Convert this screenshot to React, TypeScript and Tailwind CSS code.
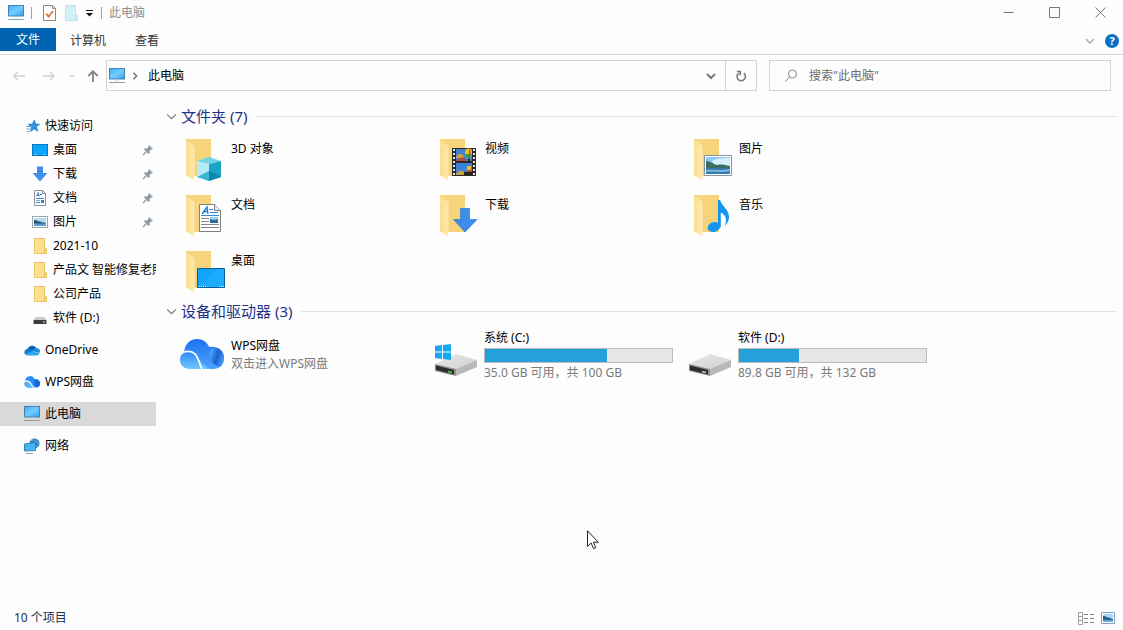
import React, { useState } from 'react';

interface IconProps {
  className?: string;
}

interface NavItem {
  label: string;
  icon: React.FC<IconProps>;
  pinned?: boolean;
}

interface Folder {
  name: string;
  overlay: React.FC;
}

interface Drive {
  name: string;
  info: string;
  used: number;
  system?: boolean;
}

const PcIcon: React.FC<IconProps> = ({ className }) => (
  <svg className={className} width="16" height="16" viewBox="0 0 16 16">
    <defs>
      <linearGradient id="pc" x1="0" y1="0" x2="1" y2="1">
        <stop offset="0" stopColor="#3eaefa" />
        <stop offset="0.5" stopColor="#74ccff" />
        <stop offset="1" stopColor="#2d9bf0" />
      </linearGradient>
    </defs>
    <rect x="0.5" y="0.5" width="15" height="10.5" fill="url(#pc)" stroke="#4483ad" />
    <path d="M6 11.5h4v1H6z" fill="#b9c9d6" />
    <path d="M0 14.5h16" stroke="#8fa0ab" />
  </svg>
);

const StarIcon: React.FC<IconProps> = ({ className }) => (
  <svg className={className} width="16" height="16" viewBox="0 0 16 16">
    <path
      d="M9.500 2l1.200 4 4 .2-3.200 2.600 1.400 4.400-3.700-2.100L5.300 13.500l1.200-4.200L3 6.300l4.200-.3z"
      fill="#2f95dd"
      stroke="#1b76b8"
      strokeWidth="0.6"
    />
    <path d="M1 8.500h4M1.500 11h4M2 13.500h2.500" stroke="#5fa9dc" />
  </svg>
);

const DesktopIcon: React.FC<IconProps> = ({ className }) => (
  <svg className={className} width="16" height="16" viewBox="0 0 16 16">
    <rect x="0.5" y="2.5" width="15" height="11" fill="#0ea3fb" stroke="#0679c4" />
    <path d="M2 12.500h4M11 12.500h3" stroke="#9bd8ff" strokeDasharray="1 1" />
  </svg>
);

const DownloadIcon: React.FC<IconProps> = ({ className }) => (
  <svg className={className} width="16" height="16" viewBox="0 0 16 16">
    <path d="M5 0.500h6v6.500h4.500L8 15.500 0.500 7H5z" fill="#3f8ee8" />
  </svg>
);

const DocIcon: React.FC<IconProps> = ({ className }) => (
  <svg className={className} width="16" height="16" viewBox="0 0 16 16">
    <path d="M2.500 0.500h8l3 3v12h-11z" fill="#fff" stroke="#8c9196" />
    <path d="M10.500 0.500v3h3" fill="none" stroke="#8c9196" />
    <path d="M4.500 6.500l1.500-4 1.500 4M5 5.500h2M8 4.500h2M4 8.500h8M4 12.500h4" fill="none" stroke="#3c82bd" />
    <path d="M4 10.500h4" stroke="#8aa8c0" />
    <path d="M9 10h3v3H9z" fill="#3c82bd" />
  </svg>
);

const PictureIcon: React.FC<IconProps> = ({ className }) => (
  <svg className={className} width="16" height="16" viewBox="0 0 16 16">
    <rect x="0.5" y="2.5" width="15" height="11" fill="#fff" stroke="#9ba7b0" />
    <path d="M2 4h12v8H2z" fill="#b4dcf6" />
    <path d="M2 6c3 0 5 2 12 3v1H2z" fill="#2c5877" />
    <path d="M2 9.500h12V12H2z" fill="#5b9fd6" />
  </svg>
);

const FolderIcon: React.FC<IconProps> = ({ className }) => (
  <svg className={className} width="16" height="16" viewBox="0 0 16 16">
    <path d="M2.500 0.500h10v10h2v5h-12z" fill="#fde08b" stroke="#e8c469" />
    <path d="M12.500 10.500v5" stroke="#e8c469" />
  </svg>
);

const DriveIcon: React.FC<IconProps> = ({ className }) => (
  <svg className={className} width="16" height="16" viewBox="0 0 16 16">
    <path d="M3.500 7h9l2 3H1.500z" fill="#c9c9c9" />
    <path d="M1.500 10h13v4h-13z" fill="#3a3d40" />
    <path d="M11 12h2" stroke="#cfe0d3" />
  </svg>
);

const OneDriveIcon: React.FC<IconProps> = ({ className }) => (
  <svg className={className} width="16" height="16" viewBox="0 0 16 16">
    <path d="M3.500 7a5 5 0 0 1 8.700-1.200L9 9.500z" fill="#0a5db5" />
    <path d="M3.600 6.800a3.600 3.600 0 0 0-2.400 5.800l7.500-3.200-2-1.700a4 4 0 0 0-3.100-.9z" fill="#1079d0" />
    <path d="M8 9l2.200-2.500a3.500 3.500 0 0 1 2.400-.6 3.300 3.300 0 0 1 2.900 5z" fill="#168edc" />
    <path d="M1.200 12.500L8.400 9l7 2.600a2.500 2.500 0 0 1-2.200 1.800H3.600a3.500 3.500 0 0 1-2.400-.9z" fill="#28a8ea" />
  </svg>
);

const CloudIcon: React.FC<IconProps> = ({ className }) => (
  <svg className={className} width="16" height="16" viewBox="0 0 44 44">
    <path d="M4 20a13 13 0 0 1 25-6c9-2 15 4 15 11a11 11 0 0 1-11 12H10C2 37-2 26 4 20z" fill="#2c8bf8" />
    <path d="M30 15c8-1 14 4 14 11a11 11 0 0 1-8 11c-7-6-11-13-6-22z" fill="#1767dc" />
    <path d="M10 20c11-3 11 10 20 17H10A9 9 0 0 1 10 20z" fill="#53b4ff" />
    <path d="M3 21c15-6 15 10 24 17" fill="none" stroke="#fff" strokeWidth="3" />
  </svg>
);

const NetworkIcon: React.FC<IconProps> = ({ className }) => (
  <svg className={className} width="16" height="16" viewBox="0 0 16 16">
    <circle cx="10.500" cy="5.500" r="5" fill="#2f7fb8" />
    <path d="M7 3c2-2 3-1 4 0s3 1 4 3M8 8c2-2 5 0 6 1" fill="none" stroke="#7fc0e8" />
    <path d="M0.500 6l11-1.500v8l-11 .5z" fill="#46b4f6" stroke="#3a7fae" />
    <path d="M2 15.500h7" stroke="#8fa6b6" />
  </svg>
);

const PinIcon: React.FC<IconProps> = ({ className }) => (
  <svg className={className} width="12" height="12" viewBox="0 0 12 12">
    <path d="M7 1l4 4-1.200.6-.6-.2-1.600 1.700.2 2-1 1L1.900 5.200l1-1 2 .2L6.600 2.800l-.2-.8z" fill="#8f9ba4" />
    <path d="M4.500 7.500L1 11" stroke="#8f9ba4" strokeWidth="1.200" />
  </svg>
);

const CubeOverlay: React.FC = () => (
  <g>
    <path d="M17 24l12-4 12 4-12 3z" fill="#6fd4e8" />
    <path d="M17 24l12 3v17l-12-4z" fill="#b5ecf5" />
    <path d="M41 24l-12 3v17l12-4z" fill="#1ba3c8" />
    <path d="M17 40l12-6v10z" fill="#37b5d2" />
    <path d="M29 34l12 6-12 4z" fill="#0b86ad" />
  </g>
);

const VideoOverlay: React.FC = () => (
  <g>
    <path d="M18 11h24v28H18z" fill="#2a2a2c" />
    <path d="M20 12v27M40 12v27" stroke="#e4e4e4" strokeWidth="2" strokeDasharray="2 2" />
    <path d="M22 12h16v12H22zM22 26h16v12H22z" fill="#3f83d6" />
    <path d="M22 20c3-4 5-4 8-1l-2 2h-6z" fill="#d99a3a" />
    <path d="M22 24c3-4 7-4 10-1v1z" fill="#c04a33" />
    <path d="M22 37c4-5 6-4 9-1v2h-9z" fill="#c9a24a" />
    <ellipse cx="34.500" cy="16" rx="3.500" ry="4.500" fill="#f3c518" />
    <path d="M35 11.500c2 2 2 7 0 9z" fill="#d5362b" />
    <path d="M31 17h7l-2 4h-3z" fill="#3a9a42" />
    <path d="M34 22h2v4h-2zM30 35h8v3h-8z" fill="#2c2018" />
    <path d="M33 29h4v4h-4z" fill="#e9bd24" />
    <path d="M34 33h3v2h-3z" fill="#d5362b" />
  </g>
);

const PictureOverlay: React.FC = () => (
  <g>
    <path d="M16.500 18.500h27v20h-27z" fill="#fff" stroke="#8795a0" />
    <path d="M18 20h24v17H18z" fill="#8fcaf2" />
    <path d="M24 24c5-3 12-3 18-3v8H26z" fill="#d9effa" />
    <path d="M18 24c5 0 8 4 12 4 3-1 7 0 12 1v3H18z" fill="#3b6d62" />
    <path d="M18 31h24v6H18z" fill="#3578ad" />
    <path d="M18 33c7-1 12 1 24-1v2c-9 2-16 0-24 1z" fill="#79b6dc" />
  </g>
);

const DocOverlay: React.FC = () => (
  <g>
    <path d="M19.500 11.500h15l6 6v21h-21z" fill="#fff" stroke="#7d7f82" />
    <path d="M34.500 11.500v6h6" fill="#e8e8e8" stroke="#7d7f82" />
    <path d="M22 21l5-7 1 7M23.500 18.500h4.500" fill="none" stroke="#1d78cf" strokeWidth="1.300" />
    <path d="M29 16.500h4M30 19.500h8M21 22.500h18" stroke="#2f8cdd" />
    <path d="M21 25.500h8M21 28.500h8M21 31.500h18M21 34.500h18" stroke="#85888b" />
    <path d="M30 24h8v6h-8z" fill="#2f6f9f" />
    <path d="M30 24h8v2l-4 1-4-1z" fill="#9fd0ee" />
  </g>
);

const DownloadOverlay: React.FC = () => (
  <path d="M26.500 15.500h9v11h7.500L31 39 19.500 26.500h7z" fill="#3c8eea" stroke="#2b78d0" strokeWidth="0.700" />
);

const MusicOverlay: React.FC = () => (
  <g fill="#1296ee">
    <ellipse cx="26" cy="34" rx="6.500" ry="4.800" transform="rotate(-15 26 34)" />
    <path d="M30 7h2.200c1 6 8.800 9 8.800 17 0 4-2 6-4 9 2-7 1-11-4.200-13.500V34H30z" />
  </g>
);

const DesktopOverlay: React.FC = () => (
  <g>
    <path d="M17.500 19.500h27v19h-27z" fill="#11a4fb" stroke="#0a5f96" />
    <path d="M18 38L38 20h6v18z" fill="#2db1fd" opacity="0.5" />
    <path d="M19 37.500h8M39 37.500h5" stroke="#e2f4ff" strokeDasharray="1 1" />
  </g>
);

const BigFolder: React.FC<{ overlay: React.FC }> = ({ overlay: Overlay }) => (
  <svg className="size-12 shrink-0" viewBox="0 0 48 48">
    <defs>
      <linearGradient id="folderBack" x1="0" y1="0" x2="1" y2="1">
        <stop offset="0" stopColor="#f7d67e" />
        <stop offset="1" stopColor="#f5d27a" />
      </linearGradient>
      <linearGradient id="folderFlap" x1="0" y1="0" x2="1" y2="0">
        <stop offset="0" stopColor="#fbdf8f" />
        <stop offset="1" stopColor="#fee9ae" />
      </linearGradient>
    </defs>
    <path d="M6 2h25v37H6z" fill="url(#folderBack)" />
    <path d="M6 2l9 7v29l-1.500 5L6 38z" fill="url(#folderFlap)" />
    <path d="M6 2l9 7v29" fill="none" stroke="#efcd7a" strokeWidth="0.600" />
    <Overlay />
  </svg>
);

const BigDrive: React.FC<{ system?: boolean }> = ({ system }) => (
  <svg className="size-12 shrink-0" viewBox="0 0 48 48">
    <defs>
      <linearGradient id="driveTop" x1="0" y1="0" x2="1" y2="1">
        <stop offset="0" stopColor="#e6e6e6" />
        <stop offset="1" stopColor="#d2d2d2" />
      </linearGradient>
    </defs>
    <path d="M1 32l21-10 21 6-21 10z" fill="url(#driveTop)" />
    <path d="M43 28v7l-21 9v-7z" fill="#b8b8b8" />
    <path d="M1 32l21 5v7L1 39z" fill="#8d8f90" />
    <path d="M2 33.500l18 4.500v4.500L2 38z" fill="#2b2d2e" />
    <path d="M14 39.500l4 1" stroke={system ? '#4fd463' : '#c6ccca'} strokeWidth="1.500" />
    {system && (
      <path d="M1 14l7-1v6.500H1zM9 12.900l8-1v7.600H9zM1 20.500h7V27l-7-1zM9 20.500h8V28l-8-1z" fill="#12aaf2" />
    )}
  </svg>
);

const BigCloud: React.FC = () => (
  <svg className="size-12 shrink-0" viewBox="0 0 48 48">
    <defs>
      <linearGradient id="cloudTop" x1="0" y1="0" x2="0" y2="1">
        <stop offset="0" stopColor="#1b72f2" />
        <stop offset="1" stopColor="#4fa5fd" />
      </linearGradient>
      <linearGradient id="cloudRight" x1="0" y1="0.300" x2="1" y2="0.700">
        <stop offset="0" stopColor="#4aa6fb" />
        <stop offset="0.500" stopColor="#1c60d0" />
        <stop offset="1" stopColor="#4ba0f8" />
      </linearGradient>
      <linearGradient id="cloudLeft" x1="0" y1="0" x2="0" y2="1">
        <stop offset="0" stopColor="#2f8cf9" />
        <stop offset="1" stopColor="#72c6ff" />
      </linearGradient>
    </defs>
    <path d="M4 20C5 12 10 7 17 7c6 0 10 3 12 8 9-1 15 4 15 11 0 6-4 11-11 11H20z" fill="url(#cloudTop)" />
    <path d="M31 17c7-3 13 2 13 9 0 5-2 8-5 9-7-3-12-9-8-18z" fill="url(#cloudRight)" />
    <path d="M0 28c0-6 5-9 10-8 9 1 10 12 20 17H10C4 37 0 33 0 28z" fill="url(#cloudLeft)" />
    <path d="M4 20c14-4 14 10 18 17" fill="none" stroke="#fff" strokeWidth="1.800" />
  </svg>
);

const Chevron: React.FC<IconProps> = ({ className }) => (
  <svg className={className} viewBox="0 0 10 10" fill="none" stroke="currentColor">
    <path d="M1 3l4 4 4-4" />
  </svg>
);

const quickAccess: NavItem[] = [
  { label: '桌面', icon: DesktopIcon, pinned: true },
  { label: '下载', icon: DownloadIcon, pinned: true },
  { label: '文档', icon: DocIcon, pinned: true },
  { label: '图片', icon: PictureIcon, pinned: true },
  { label: '2021-10', icon: FolderIcon },
  { label: '产品文 智能修复老照', icon: FolderIcon },
  { label: '公司产品', icon: FolderIcon },
  { label: '软件 (D:)', icon: DriveIcon }
];

const places: NavItem[] = [
  { label: 'OneDrive', icon: OneDriveIcon },
  { label: 'WPS网盘', icon: CloudIcon },
  { label: '此电脑', icon: PcIcon },
  { label: '网络', icon: NetworkIcon }
];

const folders: Folder[] = [
  { name: '3D 对象', overlay: CubeOverlay },
  { name: '视频', overlay: VideoOverlay },
  { name: '图片', overlay: PictureOverlay },
  { name: '文档', overlay: DocOverlay },
  { name: '下载', overlay: DownloadOverlay },
  { name: '音乐', overlay: MusicOverlay },
  { name: '桌面', overlay: DesktopOverlay }
];

const drives: Drive[] = [
  { name: '系统 (C:)', info: '35.0 GB 可用，共 100 GB', used: 65, system: true },
  { name: '软件 (D:)', info: '89.8 GB 可用，共 132 GB', used: 32 }
];

const TitleBar: React.FC = () => (
  <header className="mb-0.5 flex h-[26px] items-center pl-2">
    <PcIcon />
    <span className="ml-[7px] h-3 w-px bg-gray-400" />
    <button aria-label="属性" className="ml-[11px]">
      <svg width="13" height="16" viewBox="0 0 13 16" fill="none">
        <path d="M0.500 0.500h9l3 3v12h-12z" fill="#fff" stroke="#8b8580" />
        <path d="M9.500 0.500v3h3" stroke="#8b8580" />
        <path d="M3 8.500l2.500 3L10 6" stroke="#dd7446" strokeWidth="1.800" />
      </svg>
    </button>
    <button aria-label="新建文件夹" className="ml-[9px]">
      <svg width="14" height="16" viewBox="0 0 14 16">
        <path d="M0.500 0.500h10v10h2v5h-12z" fill="#d3f0f7" stroke="#bfe2eb" />
        <path d="M10.500 10.500v5" stroke="#bfe2eb" />
      </svg>
    </button>
    <button aria-label="自定义快速访问工具栏" className="ml-[7px]">
      <svg width="7" height="7" viewBox="0 0 7 7">
        <path d="M0 0.500h7" stroke="#111" />
        <path d="M0 3h7L3.500 6.500z" fill="#111" />
      </svg>
    </button>
    <span className="ml-2 h-3 w-px bg-gray-400" />
    <h1 className="ml-[7px] text-[#8f8f8f]">此电脑</h1>
    <div className="ml-auto flex h-6 self-start text-[#777]">
      <button aria-label="最小化" className="flex w-[46px] items-center justify-center">
        <svg width="11" height="11" viewBox="0 0 11 11" stroke="currentColor">
          <path d="M0.500 5.500h10" />
        </svg>
      </button>
      <button aria-label="最大化" className="flex w-[46px] items-center justify-center">
        <svg width="11" height="11" viewBox="0 0 11 11" stroke="currentColor" fill="none">
          <path d="M0.500 0.500h10v10h-10z" />
        </svg>
      </button>
      <button aria-label="关闭" className="flex w-[46px] items-center justify-center">
        <svg width="11" height="11" viewBox="0 0 11 11" stroke="currentColor">
          <path d="M0.500 0.500l10 10M10.500 0.500l-10 10" />
        </svg>
      </button>
    </div>
  </header>
);

const Ribbon: React.FC = () => (
  <nav className="flex h-[27px] items-center border-b border-[#d4d6d8] text-[#333]">
    <button className="h-[23px] w-14 self-start bg-[#0063b1] pt-px text-white">文件</button>
    <button className="ml-[14px]">计算机</button>
    <button className="ml-[29px]">查看</button>
    <button aria-label="展开功能区" className="ml-auto text-[#aaa]">
      <Chevron className="size-[10px] stroke-[1.5]" />
    </button>
    <button aria-label="帮助" className="mr-1 ml-[10px] size-[14px] rounded-full bg-[#0a6fc4] text-[11px] leading-[14px] font-bold text-white">
      ?
    </button>
  </nav>
);

const AddressRow: React.FC = () => {
  const [query, setQuery] = useState('');

  return (
    <div className="flex items-center pt-[5px] pr-3 pl-[13px]">
      <button aria-label="后退" className="text-[#cfd0d1]">
        <svg width="12" height="10" viewBox="0 0 12 10" fill="none" stroke="currentColor" strokeWidth="1.300">
          <path d="M12 5H1M5 0.800L0.900 5 5 9.200" />
        </svg>
      </button>
      <button aria-label="前进" className="ml-[18px] text-[#cfd0d1]">
        <svg width="12" height="10" viewBox="0 0 12 10" fill="none" stroke="currentColor" strokeWidth="1.300">
          <path d="M0 5h11M7 0.800L11.100 5 7 9.200" />
        </svg>
      </button>
      <button aria-label="最近位置" className="ml-[14px] text-[#cfd0d1]">
        <Chevron className="size-[6px] stroke-2" />
      </button>
      <button aria-label="上移" className="mr-[7px] ml-3 text-[#858585]">
        <svg width="12" height="12" viewBox="0 0 12 12" fill="none" stroke="currentColor" strokeWidth="1.800">
          <path d="M6 12V1.500M1.200 6L6 1.300 10.800 6" />
        </svg>
      </button>
      <div className="flex h-[31px] flex-1 items-center border border-[#d4d4d4]">
        <PcIcon className="ml-0.5" />
        <Chevron className="ml-[6px] size-2 -rotate-90 stroke-2 text-[#777]" />
        <button className="ml-[9px]">此电脑</button>
        <button aria-label="历史记录" className="mr-[9px] ml-auto text-[#777]">
          <Chevron className="size-[10px] stroke-2" />
        </button>
        <button aria-label="刷新" className="flex h-full w-[31px] items-center justify-center border-l border-[#d4d4d4] text-[#777]">
          <svg width="12" height="12" viewBox="0 0 12 12" fill="none" stroke="currentColor" strokeWidth="1.600">
            <path d="M8.800 3.200a4.200 4.200 0 1 1-5.200.1" />
            <path d="M1.800 1.500h3.400v3.700" />
          </svg>
        </button>
      </div>
      <label className="ml-3 flex h-[31px] w-[342px] items-center border border-[#d4d4d4] pl-[14px]">
        <svg className="shrink-0" width="14" height="14" viewBox="0 0 14 14" fill="none" stroke="#888">
          <circle cx="8.500" cy="5" r="4" />
          <path d="M5.500 8L1 12.800" />
        </svg>
        <input
          type="text"
          aria-label="搜索"
          value={query}
          onChange={(e) => setQuery(e.target.value)}
          placeholder={'搜索"此电脑"'}
          className="ml-[11px] min-w-0 flex-1 outline-none placeholder:text-[#6d6d6d]"
        />
      </label>
    </div>
  );
};

const Sidebar: React.FC = () => {
  const [active, setActive] = useState('此电脑');

  return (
    <aside className="flex w-[156px] shrink-0 flex-col gap-2 pt-[23px]">
      <div>
        <button className="flex h-6 w-full items-center gap-1 pl-[25px]">
          <StarIcon />
          快速访问
        </button>
        {quickAccess.map(({ label, icon: Icon, pinned }) => (
          <button key={label} className="flex h-6 w-full items-center gap-[5px] overflow-hidden pl-8 whitespace-nowrap">
            <Icon className="shrink-0" />
            {label}
            {pinned && <PinIcon className="mr-0.5 ml-auto" />}
          </button>
        ))}
      </div>
      {places.map(({ label, icon: Icon }) => (
        <button
          key={label}
          onClick={() => setActive(label)}
          className={`flex h-6 w-full items-center gap-[5px] pl-6 ${active === label ? 'bg-[#d9d9d9]' : ''}`}
        >
          <Icon />
          {label}
        </button>
      ))}
    </aside>
  );
};

const SectionHeading: React.FC<{ title: string }> = ({ title }) => (
  <div className="flex h-5 items-center pl-[10px]">
    <Chevron className="size-[11px] text-[#777]" />
    <h2 className="ml-1 text-[15px] leading-5 text-[#1e3287]">{title}</h2>
    <span className="ml-[9px] h-px flex-1 bg-[#e2e2e2]" />
  </div>
);

const App: React.FC = () => {
  return (
    <div className="relative flex min-h-screen flex-col bg-[#fdfdfd] font-['Noto_Sans','Noto_Sans_CJK_SC',sans-serif] text-xs text-black">
      <TitleBar />
      <Ribbon />
      <AddressRow />

      <div className="flex flex-1">
        <Sidebar />
        <main className="min-w-0 flex-1 pt-[15px] pr-[7px]">
          <SectionHeading title="文件夹 (7)" />
          <div className="grid grid-cols-[repeat(auto-fill,254px)] pt-[7px] pl-6">
            {folders.map((folder) => (
              <button key={folder.name} className="flex h-14 items-start gap-[3px] pt-1 text-left">
                <BigFolder overlay={folder.overlay} />
                <span className="leading-6">{folder.name}</span>
              </button>
            ))}
          </div>

          <SectionHeading title="设备和驱动器 (3)" />
          <div className="grid grid-cols-[repeat(auto-fill,254px)] pt-[7px] pl-6">
            <button className="flex h-14 items-center gap-[3px] text-left leading-[18px]">
              <BigCloud />
              <span className="pb-0.5">
                WPS网盘
                <span className="block text-[#7a7a7a]">双击进入WPS网盘</span>
              </span>
            </button>
            {drives.map((drive) => (
              <button key={drive.name} className="flex h-14 items-center gap-0.5 text-left leading-4">
                <BigDrive system={drive.system} />
                <span className="pb-0.5">
                  {drive.name}
                  <span className="my-0.5 block h-[15px] w-[189px] border border-[#bcbcbc] bg-[#e6e6e6]">
                    <span className="block h-full bg-[#26a0da]" style={{ width: `${drive.used}%` }} />
                  </span>
                  <span className="block text-[#7a7a7a]">{drive.info}</span>
                </span>
              </button>
            ))}
          </div>
        </main>
      </div>

      <footer className="flex h-6 items-center pr-2 pl-[14px] text-[#1e2f50]">
        10 个项目
        <button aria-label="详细信息" className="ml-auto">
          <svg width="16" height="13" viewBox="0 0 16 13" fill="none">
            <path d="M0.500 0.500h4v12h-4zM0.500 4.500h4M0.500 8.500h4" stroke="#a0a0a0" />
            <path d="M6 2.500h4M12 2.500h4M6 6.500h4M12 6.500h4M6 10.500h4M12 10.500h4" stroke="#808080" />
          </svg>
        </button>
        <button aria-label="大图标" className="ml-[7px]">
          <svg width="14" height="12" viewBox="0 0 14 12">
            <path d="M0.500 0.500h13v11h-13z" fill="#fff" stroke="#7fa3c6" />
            <path d="M2 2h10v8H2z" fill="#a9d3f3" />
            <path d="M2 4c3 0 5 2 10 3v1H2z" fill="#2b5f88" />
            <path d="M2 8h10v2H2z" fill="#6aa9dc" />
          </svg>
        </button>
      </footer>

      {/* mouse pointer */}
      <svg className="pointer-events-none absolute top-[530px] left-[587px]" width="12" height="20" viewBox="0 0 12 20">
        <path d="M0.500 0.800v15.700l3.600-3.500 2.500 5.700 2.200-1-2.400-5.500h4.900z" fill="#fff" stroke="#222" />
      </svg>
    </div>
  );
};

export default App;
